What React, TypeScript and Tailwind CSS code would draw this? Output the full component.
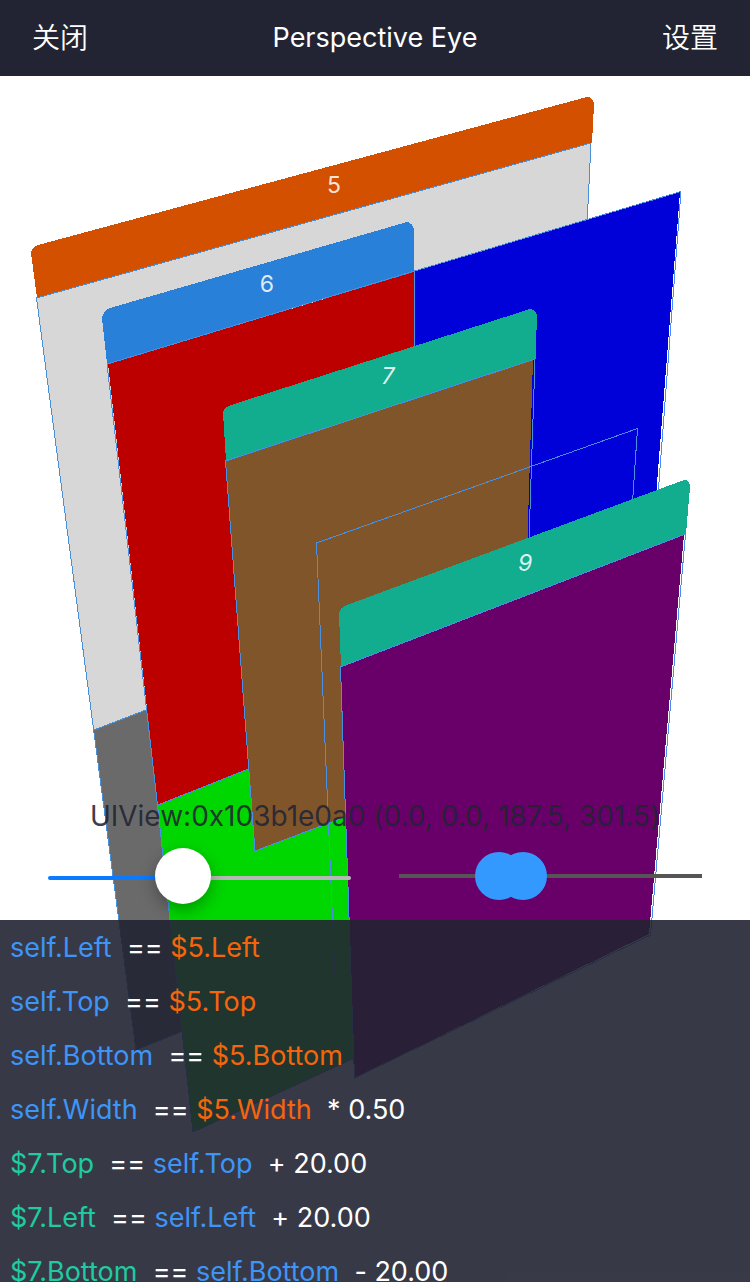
import { useState } from "react";

type Tone = "self" | "parent" | "child" | "plain";
type Part = { text: string; tone: Tone };

const toneClass: Record<Tone, string> = {
  self: "text-[#3d95f7]",
  parent: "text-[#f5650c]",
  child: "text-[#1fcba0]",
  plain: "text-white",
};

const self = (attr: string): Part => ({ text: `self.${attr}`, tone: "self" });
const parent = (attr: string): Part => ({ text: `$5.${attr}`, tone: "parent" });
const child = (attr: string): Part => ({ text: `$7.${attr}`, tone: "child" });
const plain = (text: string): Part => ({ text, tone: "plain" });

const constraints: Part[][] = [
  [self("Left"), plain("  == "), parent("Left")],
  [self("Top"), plain("  == "), parent("Top")],
  [self("Bottom"), plain("  == "), parent("Bottom")],
  [self("Width"), plain("  == "), parent("Width"), plain("  * 0.50")],
  [child("Top"), plain("  == "), self("Top"), plain("  + 20.00")],
  [child("Left"), plain("  == "), self("Left"), plain("  + 20.00")],
  [child("Bottom"), plain("  == "), self("Bottom"), plain("  - 20.00")],
];

function Scene() {
  return (
    <svg
      className="absolute inset-0 h-full w-full"
      viewBox="0 76 750 1206"
      preserveAspectRatio="xMidYMin meet"
      aria-label="View hierarchy"
    >
      <g shapeRendering="crispEdges">
        {/* depth 5 */}
        <path d="M37 298L591 143L555 880L136 1050L94 730Z" fill="#d7d7d7" />
        <path d="M94 730L562 550L555 880L136 1050Z" fill="#6a6a6a" />
        <path d="M31 253Q32 247 38 245L587 97Q593 97 594 104L592 143L37 298Z" fill="#d35000" />
        <g fill="none" stroke="#4a90d9">
          <path d="M591 143L555 880L136 1050L36.500 298Z" />
          <path d="M94 730L562 550" />
        </g>

        {/* depth 6 */}
        <path d="M108 364L414 272V703L158 805Z" fill="#bc0000" />
        <path d="M414 271L680 192L632 800L414 900Z" fill="#0000d8" />
        <path d="M158 805L414 703L560 700V964L193 1132Z" fill="#00d600" />
        <path d="M102 318Q103 311 110 308L407 222Q413 223 414 230V272L107 364Z" fill="#2980d8" />
        <g fill="none" stroke="#4a90e2">
          <path d="M107 364L157.500 805L193 1132L560 964" />
          <path d="M107.500 364L414.500 271L681 191.500L658 495" />
          <path d="M414.500 271V360" />
          <path d="M158 805L414 703" />
        </g>

        {/* depth 7 */}
        <path d="M226 461L533 359L521 750L255 851Z" fill="#80552a" />
        <path d="M223 413Q224 407 231 405L530 309Q536 310 537 316L535.500 359L226 461Z" fill="#11ad8e" />
        <path d="M225.500 461L535 359L522 750L255 851Z" fill="none" stroke="#4a90e2" />

        {/* depth 8 */}
        <path d="M336 1000L316.500 543L637.500 428.500L632 510" fill="none" stroke="#4a90e2" />

        {/* depth 9 */}
        <path d="M341 667L684 534L649 934L354 1078Z" fill="#690069" />
        <path d="M339 613Q340 608 347 605L684 480Q690 480 690 487L686 534L341 667Z" fill="#11ad8e" />
        <path d="M340.500 667L685.500 534L650.500 935L354.500 1078Z" fill="none" stroke="#4a90e2" />
      </g>

      <g fill="#ffffff" fillOpacity="0.85" fontFamily="Inter, sans-serif" fontWeight="400" fontSize="23" textAnchor="middle">
        <text x="334" y="193">5</text>
        <text x="267" y="292">6</text>
        <text x="388" y="384" fontStyle="italic">7</text>
        <text x="525" y="571" fontStyle="italic">9</text>
      </g>
    </svg>
  );
}

const depthThumb =
  "[&::-webkit-slider-thumb]:pointer-events-auto [&::-webkit-slider-thumb]:size-12 [&::-webkit-slider-thumb]:appearance-none [&::-webkit-slider-thumb]:rounded-full [&::-webkit-slider-thumb]:bg-[#3399ff]";

function Controls() {
  const [spacing, setSpacing] = useState(43.3);
  const [from, setFrom] = useState(29.8);
  const [to, setTo] = useState(39.2);
  const fill = `linear-gradient(to right, #0a7aff ${spacing}%, #b7b7b7 ${spacing}%)`;

  return (
    <div className="grid grid-cols-2 items-center gap-12 px-12 pt-3 pb-[14px]">
      <div className="relative mt-1 flex h-14 items-center">
        <div className="absolute inset-x-0 h-1 rounded-full" style={{ backgroundImage: fill }} />
        <input
          type="range"
          aria-label="Layer spacing"
          min={0}
          max={100}
          step={0.1}
          value={spacing}
          onChange={(e) => setSpacing(Number(e.target.value))}
          className="relative mb-1 h-14 w-full appearance-none bg-transparent [&::-webkit-slider-thumb]:size-14 [&::-webkit-slider-thumb]:appearance-none [&::-webkit-slider-thumb]:rounded-full [&::-webkit-slider-thumb]:bg-white [&::-webkit-slider-thumb]:shadow-[0_6px_16px_rgba(0,0,0,0.3)]"
        />
      </div>
      <div className="grid items-center">
        <div className="col-start-1 row-start-1 h-1 bg-[#555555]" />
        <input
          type="range"
          aria-label="First visible depth"
          min={0}
          max={100}
          step={0.1}
          value={from}
          onChange={(e) => setFrom(Math.min(Number(e.target.value), to))}
          className={`pointer-events-none relative col-start-1 row-start-1 h-12 w-full appearance-none bg-transparent ${depthThumb}`}
        />
        <input
          type="range"
          aria-label="Last visible depth"
          min={0}
          max={100}
          step={0.1}
          value={to}
          onChange={(e) => setTo(Math.max(Number(e.target.value), from))}
          className={`pointer-events-none relative col-start-1 row-start-1 h-12 w-full appearance-none bg-transparent ${depthThumb}`}
        />
      </div>
    </div>
  );
}

export default function App() {
  return (
    <div className="flex h-screen flex-col overflow-hidden bg-white font-['Inter','Noto_Sans_CJK_SC',sans-serif] text-[27px] leading-9 [font-feature-settings:'calt'_0]">
      <header className="flex h-19 shrink-0 items-center justify-between bg-[#222433] px-8 text-white">
        <button type="button" className="text-[28px] font-[350]">关闭</button>
        <h1>Perspective Eye</h1>
        <button type="button" className="text-[28px] font-[350]">设置</button>
      </header>
      <main className="relative flex min-h-0 flex-1 flex-col justify-end">
        <Scene />
        <div className="relative">
          <p className="text-center text-[28px] whitespace-nowrap text-[#222433]/90">
            UIView:0x103b1e0a0 (0.0, 0.0, 187.5, 301.5)
          </p>
          <Controls />
        </div>
        <ul className="relative h-[30%] shrink-0 overflow-hidden bg-[#222433]/90 px-[10px] pt-px">
          {constraints.map((parts, row) => (
            <li key={row} className="flex h-[54px] items-center whitespace-pre">
              {parts.map((part, i) => (
                <span key={i} className={toneClass[part.tone]}>{part.text}</span>
              ))}
            </li>
          ))}
        </ul>
      </main>
    </div>
  );
}
